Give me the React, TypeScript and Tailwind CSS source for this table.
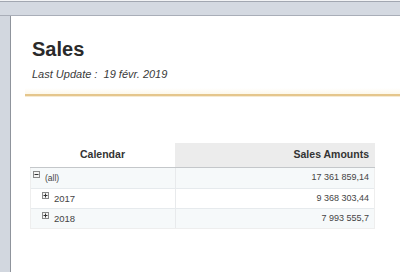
import React from "react";

type Row = { label: string; amount: string; level: number; open: boolean; shaded: boolean };

const rows: Row[] = [
  { label: "(all)", amount: "17 361 859,14", level: 0, open: true, shaded: true },
  { label: "2017", amount: "9 368 303,44", level: 1, open: false, shaded: false },
  { label: "2018", amount: "7 993 555,7", level: 1, open: false, shaded: true },
];

function ToggleBox({ open }: { open: boolean }) {
  return (
    <svg width="7" height="7" viewBox="0 0 7 7" className="shrink-0 self-start mt-[3px]">
      <rect x="0.5" y="0.5" width="6" height="6" fill="#f4f4f4" stroke="#8a8a8a" />
      <path d="M1.5 3.5h4" stroke="#333" strokeWidth="1" />
      {!open && <path d="M3.5 1.5v4" stroke="#333" strokeWidth="1" />}
    </svg>
  );
}

export default function App() {
  return (
    <div
      className="w-[400px] h-[272px] overflow-hidden bg-[#d6dbe3] flex flex-col"
      style={{ fontFamily: "Arial, 'Liberation Sans', sans-serif" }}
    >
      {/* window chrome */}
      <div className="h-[16px] shrink-0 border-t-[1px] border-t-[#f2f3f5] flex flex-col">
        <div className="h-[1px] bg-[#a2a7b1]" />
        <div className="flex-1 bg-[#d4d9e1]" />
        <div className="h-[1px] bg-[#a9aeb8]" />
      </div>
      <div className="flex flex-1 min-h-0">
        <div className="w-[10px] shrink-0 bg-[#d2d7df]" />
        <div className="flex-1 bg-white border-l border-[#8f949c] flex flex-col">
          <div className="pl-[21px] pt-[21px]">
            <div className="text-[20px] font-bold text-[#2a2a2a] leading-[24px]">Sales</div>
            <div className="mt-[6px] text-[11px] italic text-[#3a3a3a] leading-[14px]">
              Last Update :&nbsp; 19 févr. 2019
            </div>
          </div>
          <div className="mt-[7px] ml-[14px] h-[6px] bg-gradient-to-b from-white to-[#fdf8ea]" />
          <div className="ml-[14px] h-[2px] bg-[#e5c68c]" />
          <div className="ml-[14px] h-[1px] bg-[#f6ead2]" />

          {/* pivot table */}
          <div className="mt-[46px] ml-[19px] w-[345px] text-[#333]">
            <div className="flex h-[25px] border-b border-[#c4c7ca]">
              <div className="w-[145px] flex items-center justify-center text-[10.5px] font-bold text-[#333]">
                Calendar
              </div>
              <div className="flex-1 bg-[#ececec] flex items-center justify-end pr-[6px] text-[10.5px] font-bold text-[#333]">
                Sales Amounts
              </div>
            </div>
            <div className="border-x border-b border-[#eeeeee]">
              {rows.map((r, i) => (
                <div
                  key={r.label}
                  className={`flex h-[20px] ${r.shaded ? "bg-[#f6f9fa]" : "bg-white"} ${
                    i > 0 ? "border-t border-[#e6eaed]" : ""
                  }`}
                >
                  <div
                    className={`w-[145px] border-r border-[#e8eaec] flex items-center ${
                      r.level === 0 ? "pl-[2px]" : "pl-[11px]"
                    }`}
                  >
                    <ToggleBox open={r.open} />
                    <span
                      className={`${r.level === 0 ? "ml-[5px] text-[8.5px]" : "ml-[5px] text-[9.5px]"} leading-[12px] text-[#444]`}
                    >
                      {r.label}
                    </span>
                  </div>
                  <div className="flex-1 flex items-center justify-end pr-[5px] text-[9px] text-[#444]">
                    {r.amount}
                  </div>
                </div>
              ))}
            </div>
          </div>
        </div>
      </div>
    </div>
  );
}
